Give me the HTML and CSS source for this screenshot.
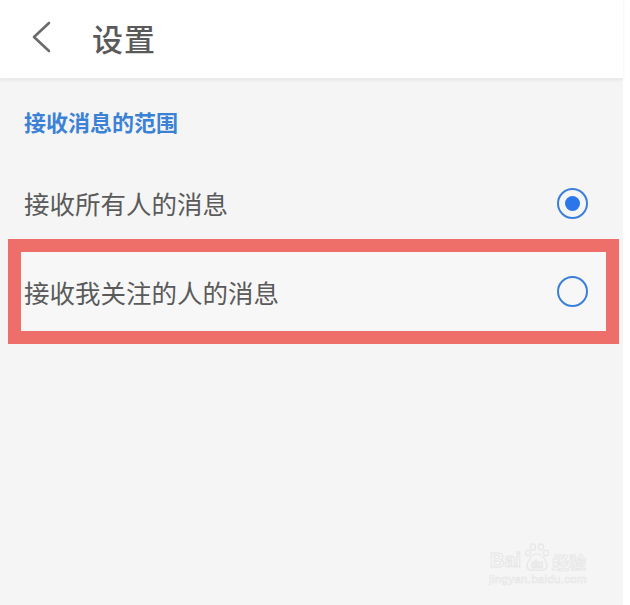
FILE: index.html
```html
<!DOCTYPE html>
<html lang="zh">
<head>
<meta charset="utf-8">
<title>设置</title>
<link rel="stylesheet" href="styles.css">
</head>
<body>
<div class="screen">
  <header class="topbar">
    <svg class="back" width="22" height="32" viewBox="0 0 22 32">
      <path d="M19 2 L4 16 L19 30" fill="none" stroke="#6b6b6b" stroke-width="2.6" stroke-linecap="round" stroke-linejoin="round"/>
    </svg>
    <h1 class="title">设置</h1>
  </header>
  <main class="content">
    <div class="section-title">接收消息的范围</div>
    <div class="row first">
      <span class="label">接收所有人的消息</span>
      <span class="radio checked"></span>
    </div>
    <div class="row highlighted">
      <span class="label">接收我关注的人的消息</span>
      <span class="radio"></span>
    </div>
  </main>
  <div class="watermark">
    <div class="wm-logo">
      <span class="wm-bai">Bai</span>
      <svg class="wm-paw" width="26" height="30" viewBox="0 0 26 30">
        <g fill="none" stroke="#e6e6e6" stroke-width="1.2">
          <ellipse cx="9" cy="5" rx="2.6" ry="3.2"/>
          <ellipse cx="17" cy="5" rx="2.6" ry="3.2"/>
          <ellipse cx="4" cy="11" rx="2.4" ry="3"/>
          <ellipse cx="22" cy="11" rx="2.4" ry="3"/>
          <path d="M13 12 C7 12 3 20 3 24 C3 28 7 29 13 28 C19 29 23 28 23 24 C23 20 19 12 13 12 Z"/>
        </g>
        <text x="13" y="26" text-anchor="middle" font-family="Liberation Sans, sans-serif" font-size="10" font-weight="bold" fill="none" stroke="#e6e6e6" stroke-width="0.8">du</text>
      </svg>
      <span class="wm-jy">经验</span>
    </div>
    <div class="wm-url">jingyan.baidu.com</div>
  </div>
</div>
</body>
</html>
```
FILE: styles.css
```css
* { box-sizing: border-box; margin: 0; padding: 0; }
html, body { width: 630px; height: 605px; background: #ffffff; overflow: hidden; }
body {
  font-family: "Noto Sans CJK SC", "Noto Sans", sans-serif;
}
.screen {
  position: relative;
  width: 623px;
  height: 605px;
  background: #f5f5f5;
}
.topbar {
  height: 79px;
  background: #ffffff;
  display: flex;
  align-items: center;
  padding-left: 30px;
  box-shadow: 0 1px 3px rgba(0,0,0,0.08);
  border-bottom: 1px solid #ececec;
}
.back { display: block; margin-top: -4px; }
.title {
  margin-left: 40px;
  font-size: 31px;
  font-weight: 500;
  color: #5a5a5a;
  letter-spacing: 1px;
  margin-top: -4px;
}
.content {
  padding-top: 27px;
}
.section-title {
  padding-left: 24px;
  font-size: 22px;
  font-weight: 700;
  color: #3b82d6;
  line-height: 30px;
  height: 30px;
}
.row {
  display: flex;
  align-items: center;
  justify-content: space-between;
  padding-left: 24px;
  padding-right: 35px;
}
.row.first {
  margin-top: 31px;
  height: 72px;
}
.label {
  font-size: 25.5px;
  color: #5a5a5a;
  line-height: 1;
}
.radio {
  width: 31px;
  height: 31px;
  border-radius: 50%;
  border: 2.6px solid #3a7fdc;
  display: flex;
  align-items: center;
  justify-content: center;
}
.radio.checked::after {
  content: "";
  width: 15px;
  height: 15px;
  border-radius: 50%;
  background: #2a76ea;
}
.highlighted {
  margin-left: 8px;
  margin-right: 4px;
  height: 105px;
  padding-left: 3px;
  padding-right: 18px;
  border: 13px solid #ee6f69;
  background: #f7f7f7;
}
.watermark {
  position: absolute;
  left: 482px;
  top: 544px;
  width: 112px;
  display: flex;
  flex-direction: column;
  align-items: center;
}
.wm-logo {
  display: flex;
  align-items: flex-end;
  height: 26px;
}
.wm-bai {
  font-family: "Liberation Sans", sans-serif;
  font-size: 20px;
  font-weight: 700;
  color: #f7f7f7;
  -webkit-text-stroke: 1px #e6e6e6;
  line-height: 1;
}
.wm-paw { display: block; margin: 0 2px -2px 3px; }
.wm-jy {
  font-size: 17px;
  font-weight: 700;
  color: #f7f7f7;
  -webkit-text-stroke: 0.8px #e6e6e6;
  line-height: 1;
}
.wm-url {
  margin-top: 4px;
  font-family: "Liberation Sans", sans-serif;
  font-size: 11.5px;
  color: #f7f7f7;
  -webkit-text-stroke: 0.6px #e6e6e6;
  letter-spacing: 0.3px;
  line-height: 1;
}
```
